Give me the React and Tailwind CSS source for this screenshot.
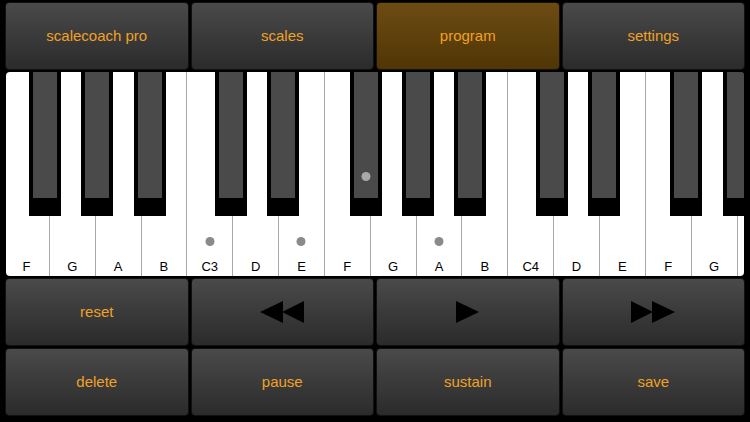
import React from 'react';

const whiteKeys = ['F', 'G', 'A', 'B', 'C3', 'D', 'E', 'F', 'G', 'A', 'B', 'C4', 'D', 'E', 'F', 'G', ''];
const whiteDots = [4, 6, 9];
// left offsets (px) of the black keys inside the keyboard
const blackKeys = [23, 75, 128, 209, 261, 344, 396, 448, 530, 582, 664, 717];
const blackDot = 5;

const Btn = ({ children, active }) => (
  <button
    className={
      active
        ? 'flex-1 flex items-center justify-center rounded-[4px] border border-[#1a1206] bg-gradient-to-b from-[#6d4c12] to-[#503606] text-[#f0a126] text-[15px]'
        : 'flex-1 flex items-center justify-center rounded-[4px] border border-[#111] bg-gradient-to-b from-[#4a4a4a] to-[#2b2b2b] text-[#f0a126] text-[15px]'
    }
  >
    {children}
  </button>
);

const Rewind = () => (
  <svg width="44" height="22" viewBox="0 0 44 22">
    <polygon points="23,0 0,11 23,22" fill="#000" />
    <polygon points="44,0 22,11 44,22" fill="#000" />
  </svg>
);

const Play = () => (
  <svg width="23" height="22" viewBox="0 0 23 22">
    <polygon points="0,0 23,11 0,22" fill="#000" />
  </svg>
);

const Forward = () => (
  <svg width="44" height="22" viewBox="0 0 44 22">
    <polygon points="0,0 22,11 0,22" fill="#000" />
    <polygon points="21,0 44,11 21,22" fill="#000" />
  </svg>
);

const Keyboard = () => (
  <div className="relative h-[204px] rounded-[4px] overflow-hidden bg-black mx-[1px]">
    <div className="flex h-full ml-[-2px]">
      {whiteKeys.map((k, i) => (
        <div
          key={i}
          className="relative shrink-0 w-[45.85px] h-full bg-white border-r border-[#a8a8a8] flex flex-col items-center justify-end pb-[1px]"
        >
          {whiteDots.includes(i) && (
            <div className="absolute top-[165px] left-1/2 -translate-x-1/2 w-[9px] h-[9px] rounded-full bg-[#8a8a8a]" />
          )}
          <span className="text-[13px] leading-[16px] text-black">{k}</span>
        </div>
      ))}
    </div>
    {blackKeys.map((left, i) => (
      <div
        key={i}
        className="absolute top-0 w-[32px] h-[144px] bg-black px-[4px] pb-[18px]"
        style={{ left }}
      >
        <div className="relative w-full h-full bg-[#4a4a4a]">
          {i === blackDot && (
            <div className="absolute top-[100px] left-1/2 -translate-x-1/2 w-[9px] h-[9px] rounded-full bg-[#a9a9a9]" />
          )}
        </div>
      </div>
    ))}
  </div>
);

export default function App() {
  return (
    <div
      className="w-[750px] h-[422px] bg-black px-[5px] pt-[2px] pb-[6px] flex flex-col gap-[2px] overflow-hidden"
      style={{ fontFamily: '"Liberation Sans", Arial, sans-serif' }}
    >
      <div className="flex gap-[2px] h-[68px]">
        <Btn>scalecoach pro</Btn>
        <Btn>scales</Btn>
        <Btn active>program</Btn>
        <Btn>settings</Btn>
      </div>
      <Keyboard />
      <div className="flex gap-[2px] h-[68px]">
        <Btn>reset</Btn>
        <Btn><Rewind /></Btn>
        <Btn><Play /></Btn>
        <Btn><Forward /></Btn>
      </div>
      <div className="flex gap-[2px] h-[68px]">
        <Btn>delete</Btn>
        <Btn>pause</Btn>
        <Btn>sustain</Btn>
        <Btn>save</Btn>
      </div>
    </div>
  );
}
